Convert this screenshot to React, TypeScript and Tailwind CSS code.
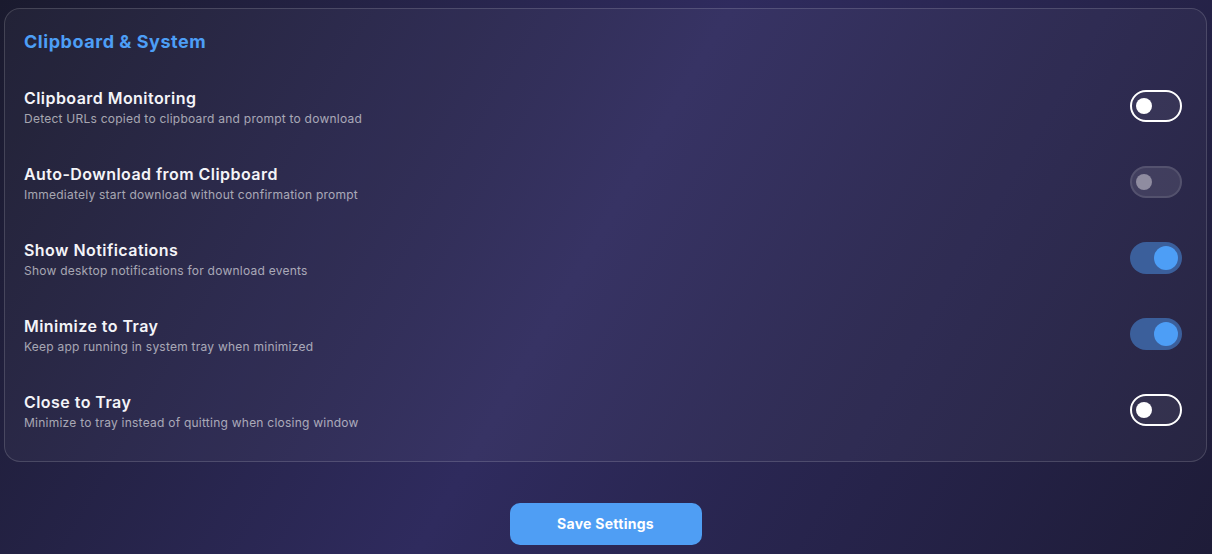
import React from "react";

type Mode = "off" | "disabled" | "on";

const ROWS: { title: string; desc: string; mode: Mode }[] = [
  {
    title: "Clipboard Monitoring",
    desc: "Detect URLs copied to clipboard and prompt to download",
    mode: "off",
  },
  {
    title: "Auto-Download from Clipboard",
    desc: "Immediately start download without confirmation prompt",
    mode: "disabled",
  },
  {
    title: "Show Notifications",
    desc: "Show desktop notifications for download events",
    mode: "on",
  },
  {
    title: "Minimize to Tray",
    desc: "Keep app running in system tray when minimized",
    mode: "on",
  },
  {
    title: "Close to Tray",
    desc: "Minimize to tray instead of quitting when closing window",
    mode: "off",
  },
];

function Toggle({ mode }: { mode: Mode }) {
  if (mode === "on") {
    return (
      <div className="flex h-8 w-[52px] shrink-0 items-center justify-end rounded-full bg-[#3b5f9b] pr-1">
        <span className="h-6 w-6 rounded-full bg-[#4d9ef6]" />
      </div>
    );
  }
  if (mode === "disabled") {
    return (
      <div className="flex h-8 w-[52px] shrink-0 items-center rounded-full border-2 border-white/10 bg-white/10 pl-1">
        <span className="h-4 w-4 rounded-full bg-[#8f8ca0]" />
      </div>
    );
  }
  return (
    <div className="flex h-8 w-[52px] shrink-0 items-center rounded-full border-2 border-white bg-white/5 pl-1">
      <span className="h-4 w-4 rounded-full bg-white" />
    </div>
  );
}

export default function App() {
  return (
    <div
      className="min-h-[554px] bg-[linear-gradient(120deg,#1a1a2e_0%,#2f2b5e_48%,#1e1c38_100%)] pt-2 pb-[9px] pl-1 pr-[5px]"
      style={{ fontFamily: "Inter, 'Noto Sans', sans-serif" }}
    >
      <section className="rounded-2xl border border-white/15 bg-white/[0.04] pt-[19px] pb-[13px] pl-[19px] pr-6">
        <h2 className="h-7 text-lg leading-7 font-bold tracking-[0.03em] text-[#4d9ef6]">
          Clipboard &amp; System
        </h2>
        <div className="mt-3">
          {ROWS.map((r) => (
            <div key={r.title} className="flex h-[76px] items-center justify-between">
              <div className="flex flex-col">
                <span className="mt-px text-base leading-6 font-semibold tracking-[0.028em] text-[#f4f4f8]">
                  {r.title}
                </span>
                <span className="mt-px text-xs leading-4 tracking-[0.02em] text-white/60">
                  {r.desc}
                </span>
              </div>
              <Toggle mode={r.mode} />
            </div>
          ))}
        </div>
      </section>
      <div className="mt-[41px] flex justify-center">
        <button className="h-[42px] w-48 rounded-[10px] bg-[#4f9ef4] text-sm font-bold tracking-[0.02em] text-white">
          Save Settings
        </button>
      </div>
    </div>
  );
}
